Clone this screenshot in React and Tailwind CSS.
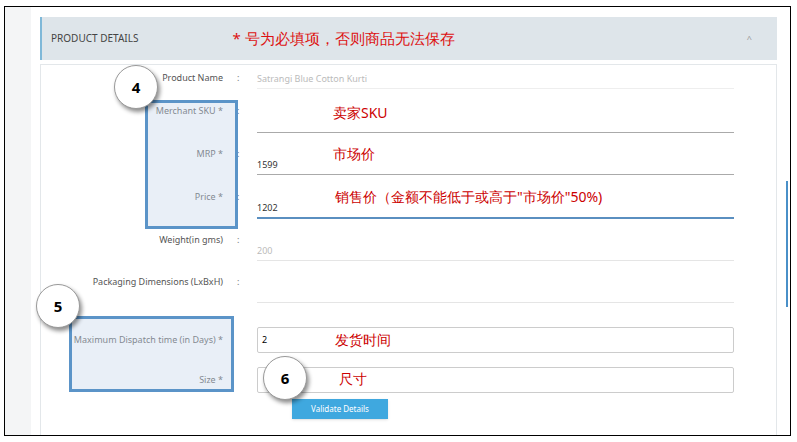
import React from "react";

const Row = ({ label, value, h, line = "border-[#cfd4d8]", faded, focus }) => (
  <div className="flex items-center" style={{ height: h }}>
    <div className="w-[182px] text-right text-[9px] text-[#555] pr-[14px] whitespace-nowrap">{label}</div>
    <div className="w-[20px] text-[9px] text-[#777]">:</div>
    <div
      className={`w-[477px] self-end pb-[3px] text-[9px] ${faded ? "text-[#bbb]" : "text-[#333]"} ${
        focus ? "border-b-2 border-[#5a8fc0]" : "border-b " + line
      }`}
    >
      {value}&nbsp;
    </div>
  </div>
);

const Circle = ({ n, className }) => (
  <div
    className={`absolute w-[44px] h-[44px] rounded-full bg-white border border-[#999] shadow-[2px_3px_4px_rgba(0,0,0,0.45)] flex items-center justify-center text-[15px] font-bold text-black ${className}`}
  >
    {n}
  </div>
);

export default function App() {
  return (
    <div className="w-[797px] h-[442px] bg-white relative font-['Open_Sans',sans-serif]">
      <div className="absolute left-[4px] top-[6px] w-[787px] h-[430px] border border-black flex">
        <div className="w-[26px] bg-[#f4f5f6]" />
        <div className="ml-[9px] mt-[10px] w-[737px] flex flex-col">
          <div className="h-[43px] bg-[#dee5ea] border-l-2 border-[#7fb8d8] flex items-center px-[9px]">
            <span className="text-[10px] text-[#444]">PRODUCT DETAILS</span>
            <span className="ml-[94px] text-[15px] text-[#d11] font-['Noto_Sans_CJK_SC',sans-serif]">
              * 号为必填项，否则商品无法保存
            </span>
            <span className="ml-auto mr-[16px] text-[9px] text-[#999]">^</span>
          </div>
          <div className="mt-[4px] flex-1 border border-b-0 border-[#e3e7ea] pl-[14px] pt-[2px]">
            <Row label="Product Name" value="Satrangi Blue Cotton Kurti" h={22} faded line="border-[#eee]" />
            <Row label="Merchant SKU *" value="" h={44} line="border-[#aaa]" />
            <Row label="MRP *" value="1599" h={42} line="border-[#aaa]" />
            <Row label="Price *" value="1202" h={44} focus />
            <Row label="Weight(in gms)" value="200" h={42} faded line="border-[#e5e5e5]" />
            <Row label="Packaging Dimensions (LxBxH)" value="" h={42} line="border-[#e5e5e5]" />
            <div className="flex items-center mt-[24px] h-[26px]">
              <div className="w-[182px] text-right text-[9px] text-[#555] pr-[14px] whitespace-nowrap">Maximum Dispatch time (in Days) *</div>
              <div className="w-[20px]" />
              <div className="w-[477px] h-[26px] border border-[#ccc] rounded-[2px] text-[9px] pl-[4px] flex items-center">2</div>
            </div>
            <div className="flex items-center mt-[14px] h-[26px]">
              <div className="w-[182px] text-right text-[9px] text-[#555] pr-[14px]">Size *</div>
              <div className="w-[20px]" />
              <div className="w-[477px] h-[26px] border border-[#ccc] rounded-[2px]" />
            </div>
            <div className="ml-[237px] mt-[6px] w-[96px] h-[20px] bg-[#3fa8df] text-white text-[8px] flex items-center justify-center shadow-sm">
              Validate Details
            </div>
          </div>
        </div>
        <div className="absolute right-[2px] top-[174px] w-[2px] h-[126px] bg-[#4a90c8]" />
      </div>

      {/* annotation overlays */}
      <div className="absolute left-[145px] top-[100px] w-[93px] h-[129px] border-[3px] border-[#5b94c8] bg-[#c9d6ea]/40" />
      <div className="absolute left-[69px] top-[316px] w-[165px] h-[76px] border-[3px] border-[#5b94c8] bg-[#c9d6ea]/40" />

      <div className="absolute font-['Noto_Sans_CJK_SC',sans-serif] text-[14px] text-[#c00] leading-none">
        <span className="absolute left-[333px] top-[106px] whitespace-nowrap">卖家SKU</span>
        <span className="absolute left-[333px] top-[147px] whitespace-nowrap">市场价</span>
        <span className="absolute left-[335px] top-[190px] whitespace-nowrap">销售价（金额不能低于或高于"市场价"50%)</span>
        <span className="absolute left-[335px] top-[333px] whitespace-nowrap">发货时间</span>
        <span className="absolute left-[339px] top-[372px] whitespace-nowrap">尺寸</span>
      </div>

      <Circle n="4" className="left-[114px] top-[65px]" />
      <Circle n="5" className="left-[36px] top-[284px]" />
      <Circle n="6" className="left-[263px] top-[356px]" />
    </div>
  );
}
